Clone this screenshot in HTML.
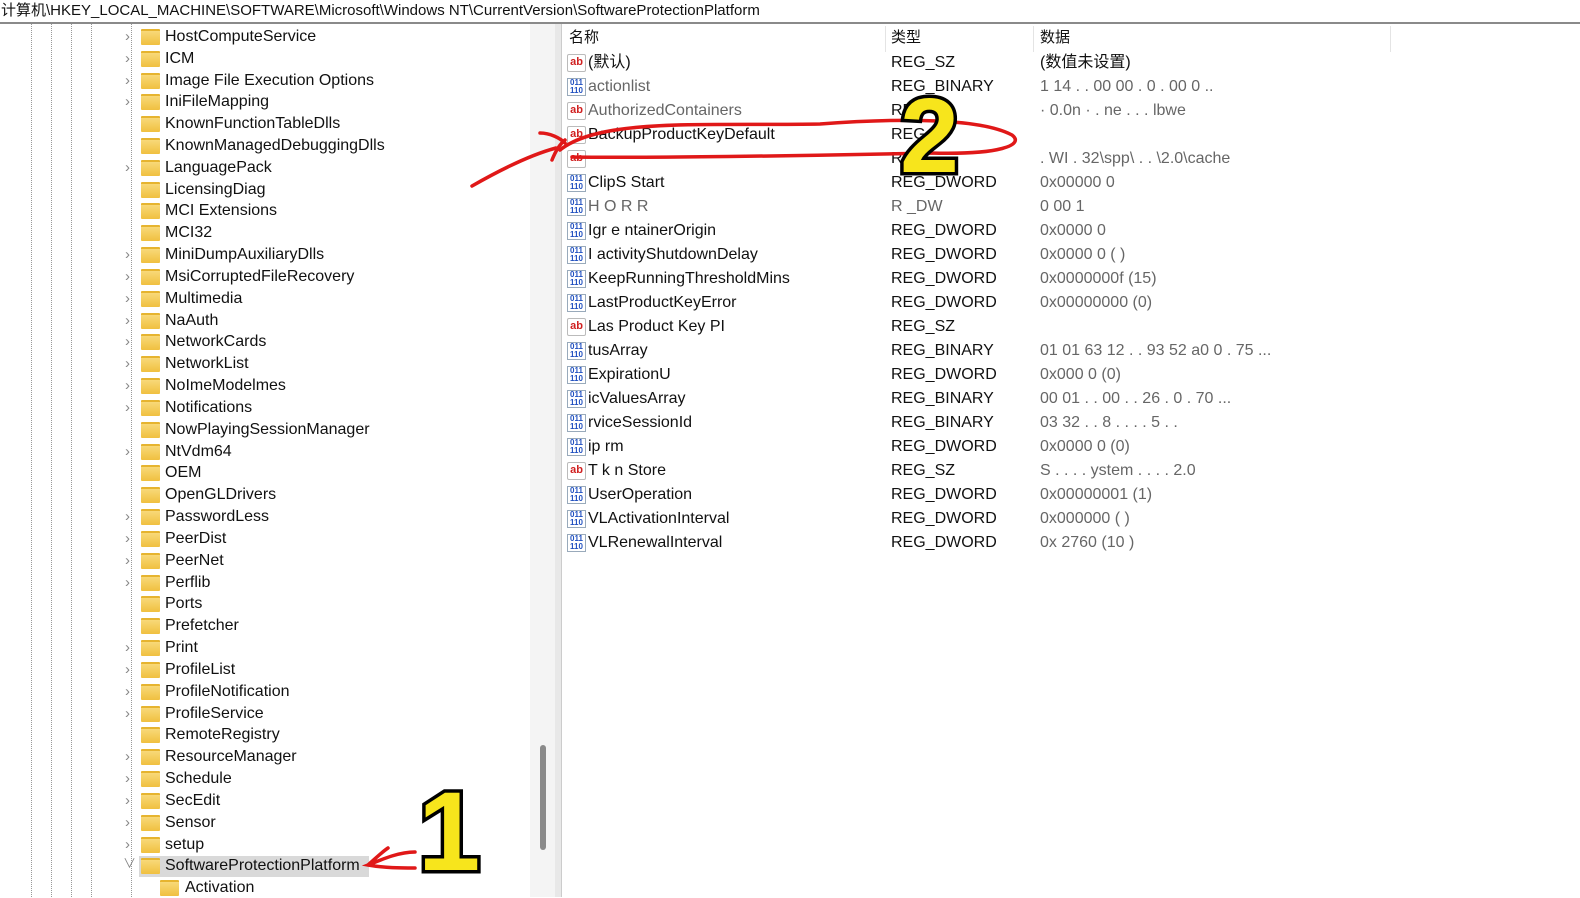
<!DOCTYPE html>
<html><head><meta charset="utf-8"><style>
body{margin:0;width:1580px;height:897px;overflow:hidden;background:#fff;font-family:"Liberation Sans","Noto Sans CJK SC",sans-serif;position:relative;color:#111}
.addr{position:absolute;left:0;top:0;width:1580px;height:22px;font-size:15px;line-height:22px;padding-left:1px;border-bottom:2px solid #8a8a8a}
.t{position:absolute;left:165px;font-size:16px;line-height:20px;height:20px;white-space:nowrap}
.f{position:absolute;left:141px;width:19px;height:14px;background:linear-gradient(#f8d979,#f0c040);border-top:2px solid #e6b430;border-radius:1px}
.c{position:absolute;left:125px;font-size:15px;color:#888;line-height:20px}
.dl{position:absolute;top:24px;bottom:0;width:0;border-left:1px dotted #999}
.r{position:absolute;font-size:16px;line-height:20px;white-space:nowrap}
.ia{position:absolute;left:567px;width:17px;height:16px;border:1px solid #bbb;background:#fff;color:#d02020;font-size:11px;font-weight:bold;line-height:14px;text-align:center;border-radius:2px}
.ib{position:absolute;left:567px;width:17px;height:16px;color:#2050c0;font-size:8px;font-weight:bold;line-height:8px;text-align:center;border:1px solid #9ab}
.g{color:#666}
</style></head><body>
<div class="addr">计算机\HKEY_LOCAL_MACHINE\SOFTWARE\Microsoft\Windows NT\CurrentVersion\SoftwareProtectionPlatform</div>
<div class="dl" style="left:31px"></div><div class="dl" style="left:51px"></div><div class="dl" style="left:71px"></div><div class="dl" style="left:91px"></div><div class="dl" style="left:131px"></div>
<div style="position:absolute;left:530px;top:24px;width:25px;height:873px;background:#f4f4f4"></div>
<div style="position:absolute;left:540px;top:745px;width:6px;height:105px;background:#8a8a8a;border-radius:3px"></div>
<div style="position:absolute;left:555px;top:24px;width:6px;height:873px;background:#e8e8e8;border-right:1px solid #ccc"></div>

<div class="c" style="top:27px">›</div><div class="f" style="top:29px"></div><div class="t" style="top:27px">HostComputeService</div>
<div class="c" style="top:49px">›</div><div class="f" style="top:51px"></div><div class="t" style="top:49px">ICM</div>
<div class="c" style="top:71px">›</div><div class="f" style="top:73px"></div><div class="t" style="top:71px">Image File Execution Options</div>
<div class="c" style="top:92px">›</div><div class="f" style="top:94px"></div><div class="t" style="top:92px">IniFileMapping</div>
<div class="f" style="top:116px"></div><div class="t" style="top:114px">KnownFunctionTableDlls</div>
<div class="f" style="top:138px"></div><div class="t" style="top:136px">KnownManagedDebuggingDlls</div>
<div class="c" style="top:158px">›</div><div class="f" style="top:160px"></div><div class="t" style="top:158px">LanguagePack</div>
<div class="f" style="top:182px"></div><div class="t" style="top:180px">LicensingDiag</div>
<div class="f" style="top:203px"></div><div class="t" style="top:201px">MCI Extensions</div>
<div class="f" style="top:225px"></div><div class="t" style="top:223px">MCI32</div>
<div class="c" style="top:245px">›</div><div class="f" style="top:247px"></div><div class="t" style="top:245px">MiniDumpAuxiliaryDlls</div>
<div class="c" style="top:267px">›</div><div class="f" style="top:269px"></div><div class="t" style="top:267px">MsiCorruptedFileRecovery</div>
<div class="c" style="top:289px">›</div><div class="f" style="top:291px"></div><div class="t" style="top:289px">Multimedia</div>
<div class="c" style="top:311px">›</div><div class="f" style="top:313px"></div><div class="t" style="top:311px">NaAuth</div>
<div class="c" style="top:332px">›</div><div class="f" style="top:334px"></div><div class="t" style="top:332px">NetworkCards</div>
<div class="c" style="top:354px">›</div><div class="f" style="top:356px"></div><div class="t" style="top:354px">NetworkList</div>
<div class="c" style="top:376px">›</div><div class="f" style="top:378px"></div><div class="t" style="top:376px">NoImeModelmes</div>
<div class="c" style="top:398px">›</div><div class="f" style="top:400px"></div><div class="t" style="top:398px">Notifications</div>
<div class="f" style="top:422px"></div><div class="t" style="top:420px">NowPlayingSessionManager</div>
<div class="c" style="top:442px">›</div><div class="f" style="top:444px"></div><div class="t" style="top:442px">NtVdm64</div>
<div class="f" style="top:465px"></div><div class="t" style="top:463px">OEM</div>
<div class="f" style="top:487px"></div><div class="t" style="top:485px">OpenGLDrivers</div>
<div class="c" style="top:507px">›</div><div class="f" style="top:509px"></div><div class="t" style="top:507px">PasswordLess</div>
<div class="c" style="top:529px">›</div><div class="f" style="top:531px"></div><div class="t" style="top:529px">PeerDist</div>
<div class="c" style="top:551px">›</div><div class="f" style="top:553px"></div><div class="t" style="top:551px">PeerNet</div>
<div class="c" style="top:573px">›</div><div class="f" style="top:575px"></div><div class="t" style="top:573px">Perflib</div>
<div class="f" style="top:596px"></div><div class="t" style="top:594px">Ports</div>
<div class="f" style="top:618px"></div><div class="t" style="top:616px">Prefetcher</div>
<div class="c" style="top:638px">›</div><div class="f" style="top:640px"></div><div class="t" style="top:638px">Print</div>
<div class="c" style="top:660px">›</div><div class="f" style="top:662px"></div><div class="t" style="top:660px">ProfileList</div>
<div class="c" style="top:682px">›</div><div class="f" style="top:684px"></div><div class="t" style="top:682px">ProfileNotification</div>
<div class="c" style="top:704px">›</div><div class="f" style="top:706px"></div><div class="t" style="top:704px">ProfileService</div>
<div class="f" style="top:727px"></div><div class="t" style="top:725px">RemoteRegistry</div>
<div class="c" style="top:747px">›</div><div class="f" style="top:749px"></div><div class="t" style="top:747px">ResourceManager</div>
<div class="c" style="top:769px">›</div><div class="f" style="top:771px"></div><div class="t" style="top:769px">Schedule</div>
<div class="c" style="top:791px">›</div><div class="f" style="top:793px"></div><div class="t" style="top:791px">SecEdit</div>
<div class="c" style="top:813px">›</div><div class="f" style="top:815px"></div><div class="t" style="top:813px">Sensor</div>
<div class="c" style="top:835px">›</div><div class="f" style="top:837px"></div><div class="t" style="top:835px">setup</div>
<div style="position:absolute;left:139px;top:856px;width:230px;height:21px;background:#d9d9d9"></div>
<div class="c" style="top:854px;left:123px;font-size:13px">∨</div><div class="f" style="top:858px"></div><div class="t" style="top:856px">SoftwareProtectionPlatform</div>
<div class="f" style="top:880px;left:160px"></div><div class="t" style="top:878px;left:185px">Activation</div>

<div style="position:absolute;left:885px;top:26px;height:26px;border-left:1px solid #e4e4e4"></div>
<div style="position:absolute;left:1033px;top:26px;height:26px;border-left:1px solid #e4e4e4"></div>
<div style="position:absolute;left:1390px;top:26px;height:26px;border-left:1px solid #e4e4e4"></div>
<div class="r" style="left:569px;top:28px;font-size:15px">名称</div>
<div class="r" style="left:891px;top:28px;font-size:15px">类型</div>
<div class="r" style="left:1040px;top:28px;font-size:15px">数据</div>

<div class="ia" style="top:54px">ab</div><div class="r" style="left:588px;top:53px">(默认)</div><div class="r" style="left:891px;top:53px">REG_SZ</div><div class="r" style="left:1040px;top:53px">(数值未设置)</div>
<div class="ib" style="top:78px">011<br>110</div><div class="r g" style="left:588px;top:77px">actionlist</div><div class="r" style="left:891px;top:77px">REG_BINARY</div><div class="r g" style="left:1040px;top:77px">1 14 . . 00 00 . 0 . 00 0 ..</div>
<div class="ia" style="top:102px">ab</div><div class="r g" style="left:588px;top:101px">AuthorizedContainers</div><div class="r" style="left:891px;top:101px">RE</div><div class="r g" style="left:1040px;top:101px">· 0.0n ·  . ne . . . lbwe</div>
<div class="ia" style="top:126px">ab</div><div class="r" style="left:588px;top:125px">BackupProductKeyDefault</div><div class="r" style="left:891px;top:125px">REG</div>
<div class="ia" style="top:150px">ab</div><div class="r" style="left:891px;top:149px">R</div><div class="r g" style="left:1040px;top:149px">. WI  . 32\spp\ . . \2.0\cache</div>
<div class="ib" style="top:174px">011<br>110</div><div class="r" style="left:588px;top:173px">ClipS  Start</div><div class="r" style="left:891px;top:173px">REG_DWORD</div><div class="r g" style="left:1040px;top:173px">0x00000 0</div>
<div class="ib" style="top:198px">011<br>110</div><div class="r g" style="left:588px;top:197px">H  O  R  R</div><div class="r g" style="left:891px;top:197px">R  _DW  </div><div class="r g" style="left:1040px;top:197px">0  00  1</div>
<div class="ib" style="top:222px">011<br>110</div><div class="r" style="left:588px;top:221px">Igr  e  ntainerOrigin</div><div class="r" style="left:891px;top:221px">REG_DWORD</div><div class="r g" style="left:1040px;top:221px">0x0000  0</div>
<div class="ib" style="top:246px">011<br>110</div><div class="r" style="left:588px;top:245px">I  activityShutdownDelay</div><div class="r" style="left:891px;top:245px">REG_DWORD</div><div class="r g" style="left:1040px;top:245px">0x0000  0 (  )</div>
<div class="ib" style="top:270px">011<br>110</div><div class="r" style="left:588px;top:269px">KeepRunningThresholdMins</div><div class="r" style="left:891px;top:269px">REG_DWORD</div><div class="r g" style="left:1040px;top:269px">0x0000000f (15)</div>
<div class="ib" style="top:294px">011<br>110</div><div class="r" style="left:588px;top:293px">LastProductKeyError</div><div class="r" style="left:891px;top:293px">REG_DWORD</div><div class="r g" style="left:1040px;top:293px">0x00000000 (0)</div>
<div class="ia" style="top:318px">ab</div><div class="r" style="left:588px;top:317px">Las Product Key PI</div><div class="r" style="left:891px;top:317px">REG_SZ</div>
<div class="ib" style="top:342px">011<br>110</div><div class="r" style="left:588px;top:341px">    tusArray</div><div class="r" style="left:891px;top:341px">REG_BINARY</div><div class="r g" style="left:1040px;top:341px">01 01 63 12 . . 93 52 a0 0 . 75 ...</div>
<div class="ib" style="top:366px">011<br>110</div><div class="r" style="left:588px;top:365px">  ExpirationU</div><div class="r" style="left:891px;top:365px">REG_DWORD</div><div class="r g" style="left:1040px;top:365px">0x000  0 (0)</div>
<div class="ib" style="top:390px">011<br>110</div><div class="r" style="left:588px;top:389px">  icValuesArray</div><div class="r" style="left:891px;top:389px">REG_BINARY</div><div class="r g" style="left:1040px;top:389px">00 01 . . 00 . . 26 . 0 . 70 ...</div>
<div class="ib" style="top:414px">011<br>110</div><div class="r" style="left:588px;top:413px">  rviceSessionId</div><div class="r" style="left:891px;top:413px">REG_BINARY</div><div class="r g" style="left:1040px;top:413px">03 32 . . 8 . . . . 5 . .</div>
<div class="ib" style="top:438px">011<br>110</div><div class="r" style="left:588px;top:437px">  ip  rm</div><div class="r" style="left:891px;top:437px">REG_DWORD</div><div class="r g" style="left:1040px;top:437px">0x0000  0 (0)</div>
<div class="ia" style="top:462px">ab</div><div class="r" style="left:588px;top:461px">T k n Store</div><div class="r" style="left:891px;top:461px">REG_SZ</div><div class="r g" style="left:1040px;top:461px">S . . . . ystem . . . . 2.0</div>
<div class="ib" style="top:486px">011<br>110</div><div class="r" style="left:588px;top:485px">UserOperation</div><div class="r" style="left:891px;top:485px">REG_DWORD</div><div class="r g" style="left:1040px;top:485px">0x00000001 (1)</div>
<div class="ib" style="top:510px">011<br>110</div><div class="r" style="left:588px;top:509px">VLActivationInterval</div><div class="r" style="left:891px;top:509px">REG_DWORD</div><div class="r g" style="left:1040px;top:509px">0x000000 (  )</div>
<div class="ib" style="top:534px">011<br>110</div><div class="r" style="left:588px;top:533px">VLRenewalInterval</div><div class="r" style="left:891px;top:533px">REG_DWORD</div><div class="r g" style="left:1040px;top:533px">0x  2760 (10 )</div>

<svg style="position:absolute;left:0;top:0" width="1580" height="897">
<g fill="none" stroke="#e01818" stroke-width="3.5" stroke-linecap="round">
<path d="M560 150 C600 118 700 126 820 124 C900 118 980 118 1012 135 C1025 145 1000 155 930 153 C800 156 640 158 572 157"/>
<path d="M472 186 C500 170 530 155 556 148"/>
<path d="M540 133 C550 133 560 138 565 143 M552 160 C556 150 560 144 565 140"/>
<path d="M415 852 C400 852 385 858 368 865 C385 868 400 868 415 868 M368 865 C376 858 382 852 388 848"/>
</g>
<text x="900" y="172" font-family="Liberation Sans" font-weight="bold" font-size="106" fill="#f7e51c" stroke="#000" stroke-width="7" paint-order="stroke">2</text>
<text x="418" y="870" font-family="Liberation Sans" font-weight="bold" font-size="112" fill="#f7e51c" stroke="#000" stroke-width="7" paint-order="stroke">1</text>
</svg>
</body></html>
